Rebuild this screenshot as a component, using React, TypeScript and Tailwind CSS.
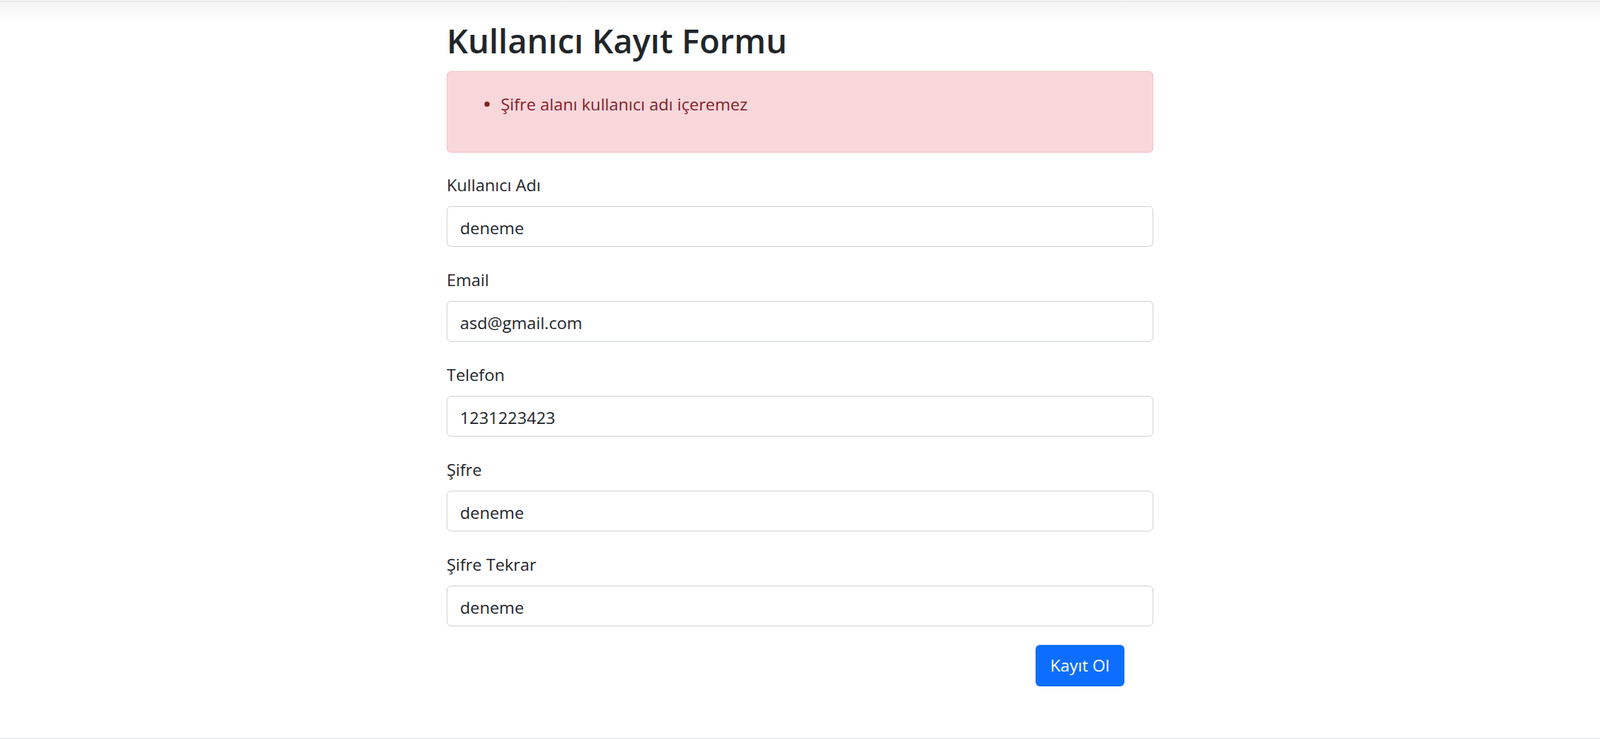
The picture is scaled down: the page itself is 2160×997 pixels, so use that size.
import { useState } from 'react';

const fields = [
  { id: 'username', label: 'Kullanıcı Adı', value: 'deneme', type: 'text' },
  { id: 'email', label: 'Email', value: 'asd@gmail.com', type: 'email' },
  { id: 'phone', label: 'Telefon', value: '1231223423', type: 'text' },
  { id: 'password', label: 'Şifre', value: 'deneme', type: 'text' },
  { id: 'password2', label: 'Şifre Tekrar', value: 'deneme', type: 'text' },
];

const App = () => {
  const [values, setValues] = useState<Record<string, string>>(
    Object.fromEntries(fields.map((f) => [f.id, f.value]))
  );

  return (
    <div className="flex min-h-[997px] flex-col bg-white font-['Open_Sans',sans-serif] text-[#212529]">
      {/* Shadow from the navbar above */}
      <div className="mt-px h-[26px] border-t border-[#dedede] bg-linear-to-b from-[#f3f3f3] to-white" />

      <main className="mx-auto w-[954px]">
        <h2 className="mb-[13px] h-[56px] text-[45px] leading-[56px] font-semibold">Kullanıcı Kayıt Formu</h2>

        {/* Error alert */}
        <div className="mb-[26px] h-[110px] rounded-[6px] border border-[#f5c2c7] bg-[#f8d7da] pt-[26px] pl-[50px] text-[#842029]">
          <ul>
            <li className="flex h-[35px] items-center gap-[15px] text-[22.5px] leading-[35px]">
              <span className="h-[7px] w-[7px] rounded-full bg-[#842029]" />
              Şifre alanı kullanıcı adı içeremez
            </li>
          </ul>
        </div>

        <form onSubmit={(e) => e.preventDefault()}>
          {fields.map((field) => (
            <div key={field.id} className="mb-[27px]">
              <label htmlFor={field.id} className="mb-[11px] block h-[35px] text-[22.5px] leading-[35px]">
                {field.label}
              </label>
              <input
                id={field.id}
                type={field.type}
                value={values[field.id]}
                onChange={(e) => setValues({ ...values, [field.id]: e.target.value })}
                className="block h-[55px] w-full rounded-[6px] border border-[#ced4da] bg-white px-[17px] pt-[3px] text-[22.5px] text-[#212529] outline-none"
              />
            </div>
          ))}

          <div className="-mt-[2px] flex justify-end pr-[39px]">
            <button
              type="submit"
              className="h-[56px] rounded-[6px] bg-[#0d6efd] px-[20px] text-[22.5px] text-white"
            >
              Kayıt Ol
            </button>
          </div>
        </form>
      </main>

      <div className="mt-auto border-b border-[#dee2e6]" />
    </div>
  );
};

export default App;
